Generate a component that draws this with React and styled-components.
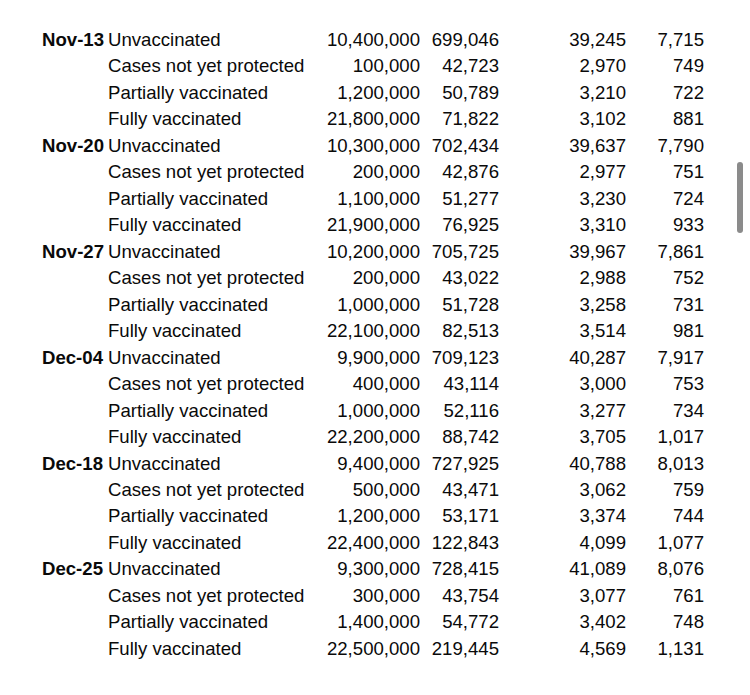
import React from "react";
import styled, { createGlobalStyle } from "styled-components";

const weeks = [
  {
    date: "Nov-13",
    rows: [
      ["10,400,000", "699,046", "39,245", "7,715"],
      ["100,000", "42,723", "2,970", "749"],
      ["1,200,000", "50,789", "3,210", "722"],
      ["21,800,000", "71,822", "3,102", "881"],
    ],
  },
  {
    date: "Nov-20",
    rows: [
      ["10,300,000", "702,434", "39,637", "7,790"],
      ["200,000", "42,876", "2,977", "751"],
      ["1,100,000", "51,277", "3,230", "724"],
      ["21,900,000", "76,925", "3,310", "933"],
    ],
  },
  {
    date: "Nov-27",
    rows: [
      ["10,200,000", "705,725", "39,967", "7,861"],
      ["200,000", "43,022", "2,988", "752"],
      ["1,000,000", "51,728", "3,258", "731"],
      ["22,100,000", "82,513", "3,514", "981"],
    ],
  },
  {
    date: "Dec-04",
    rows: [
      ["9,900,000", "709,123", "40,287", "7,917"],
      ["400,000", "43,114", "3,000", "753"],
      ["1,000,000", "52,116", "3,277", "734"],
      ["22,200,000", "88,742", "3,705", "1,017"],
    ],
  },
  {
    date: "Dec-18",
    rows: [
      ["9,400,000", "727,925", "40,788", "8,013"],
      ["500,000", "43,471", "3,062", "759"],
      ["1,200,000", "53,171", "3,374", "744"],
      ["22,400,000", "122,843", "4,099", "1,077"],
    ],
  },
  {
    date: "Dec-25",
    rows: [
      ["9,300,000", "728,415", "41,089", "8,076"],
      ["300,000", "43,754", "3,077", "761"],
      ["1,400,000", "54,772", "3,402", "748"],
      ["22,500,000", "219,445", "4,569", "1,131"],
    ],
  },
];

const categories = [
  "Unvaccinated",
  "Cases not yet protected",
  "Partially vaccinated",
  "Fully vaccinated",
];

const GlobalStyle = createGlobalStyle`
  body {
    margin: 0;
    background: #fff;
    font-family: "Liberation Sans", Arial, sans-serif;
  }
`;

const Page = styled.div`
  position: relative;
  width: 750px;
  height: 695px;
  overflow: hidden;
  background: #fff;
`;

const Table = styled.div`
  display: grid;
  grid-template-columns: 66px 212px 100px 79px 127px 78px;
  grid-auto-rows: 26.48px;
  padding: 27px 0 0 42px;
  font-size: 18.6px;
  line-height: 26.48px;
  color: #0a0a0a;
`;

const Cell = styled.div`
  white-space: nowrap;
  text-align: ${(p) => (p.$num ? "right" : "left")};
  font-weight: ${(p) => (p.$bold ? 700 : 400)};
`;

const Scrollbar = styled.div`
  position: absolute;
  left: 737px;
  top: 162px;
  width: 6px;
  height: 71px;
  border-radius: 3px;
  background: #8b8b8b;
`;

export default function App() {
  return (
    <>
      <GlobalStyle />
      <Page>
        <Table>
          {weeks.map((w) =>
            w.rows.map((r, i) => (
              <React.Fragment key={w.date + i}>
                <Cell $bold>{i === 0 ? w.date : ""}</Cell>
                <Cell>{categories[i]}</Cell>
                {r.map((v, j) => (
                  <Cell $num key={j}>
                    {v}
                  </Cell>
                ))}
              </React.Fragment>
            ))
          )}
        </Table>
        <Scrollbar />
      </Page>
    </>
  );
}
